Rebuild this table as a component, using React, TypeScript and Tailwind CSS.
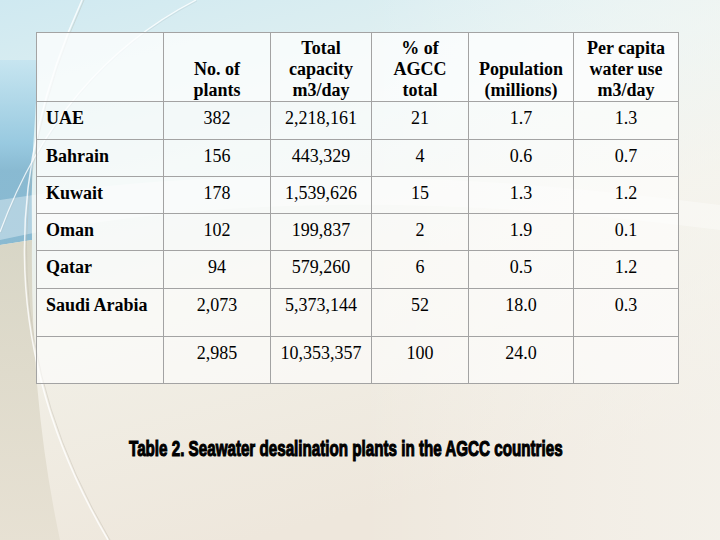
import React from 'react';

const serif = { fontFamily: '"Liberation Serif", "Times New Roman", serif' };

type Row = { name: string; cells: string[]; h: string };

const rows: Row[] = [
  { name: 'UAE', cells: ['382', '2,218,161', '21', '1.7', '1.3'], h: 'h-[38px]' },
  { name: 'Bahrain', cells: ['156', '443,329', '4', '0.6', '0.7'], h: 'h-[37px]' },
  { name: 'Kuwait', cells: ['178', '1,539,626', '15', '1.3', '1.2'], h: 'h-[37px]' },
  { name: 'Oman', cells: ['102', '199,837', '2', '1.9', '0.1'], h: 'h-[37px]' },
  { name: 'Qatar', cells: ['94', '579,260', '6', '0.5', '1.2'], h: 'h-[38px]' },
  { name: 'Saudi Arabia', cells: ['2,073', '5,373,144', '52', '18.0', '0.3'], h: 'h-[48px]' },
  { name: '', cells: ['2,985', '10,353,357', '100', '24.0', ''], h: 'h-[47px]' },
];

const headers = [
  ['No. of', 'plants'],
  ['Total', 'capacity', 'm3/day'],
  ['% of', 'AGCC', 'total'],
  ['Population', '(millions)'],
  ['Per capita', 'water use', 'm3/day'],
];

function Backdrop() {
  return (
    <svg className="absolute inset-0 w-full h-full" viewBox="0 0 720 540" preserveAspectRatio="none">
      <defs>
        <linearGradient id="base" x1="0" y1="0" x2="0.35" y2="1">
          <stop offset="0" stopColor="#cfe9f1" />
          <stop offset="0.35" stopColor="#e6f2f1" />
          <stop offset="0.6" stopColor="#f1efe6" />
          <stop offset="1" stopColor="#eee7dc" />
        </linearGradient>
        <linearGradient id="topright" x1="0" y1="0" x2="1" y2="0">
          <stop offset="0" stopColor="#ffffff" stopOpacity="0" />
          <stop offset="1" stopColor="#f8f8f4" stopOpacity="0.9" />
        </linearGradient>
        <linearGradient id="leftblue" x1="0" y1="0" x2="0" y2="1">
          <stop offset="0" stopColor="#c4e4f0" />
          <stop offset="0.45" stopColor="#8cc3dd" />
          <stop offset="0.6" stopColor="#79b0cc" />
          <stop offset="1" stopColor="#79b0cc" />
        </linearGradient>
        <linearGradient id="lefttan" x1="0" y1="0" x2="0" y2="1">
          <stop offset="0" stopColor="#d6d3c2" />
          <stop offset="1" stopColor="#e6e0d2" />
        </linearGradient>
      </defs>
      <rect width="720" height="540" fill="url(#base)" />
      <rect x="360" width="360" height="540" fill="url(#topright)" opacity="0.6" />
      <path d="M0,60 L40,60 Q30,150 32,240 L0,245 Z" fill="url(#leftblue)" opacity="0.85" />
      <path d="M0,245 L32,240 Q30,400 60,540 L0,540 Z" fill="url(#lefttan)" opacity="0.9" />
      <path d="M0,200 Q300,150 720,205 L720,230 Q300,175 0,240 Z" fill="#ffffff" opacity="0.35" />
      <path d="M82,0 Q-45,280 108,540" fill="none" stroke="#ffffff" strokeWidth="1.5" opacity="0.8" />
      <path d="M82,0 Q-45,280 108,540" fill="none" stroke="#b8b4a8" strokeWidth="0.6" opacity="0.6" transform="translate(2,0)" />
      <path d="M196,0 Q60,70 0,232" fill="none" stroke="#ffffff" strokeWidth="1.2" opacity="0.8" />
      <path d="M196,0 Q60,70 0,232" fill="none" stroke="#a9b8bc" strokeWidth="0.5" opacity="0.5" transform="translate(1,1)" />
    </svg>
  );
}

export default function App() {
  return (
    <div className="relative w-[720px] h-[540px] overflow-hidden">
      <Backdrop />
      <div className="relative pt-[32px] pl-[36px]">
        <table
          className="table-fixed border-collapse bg-white/60 text-[18px] leading-[21px] text-black"
          style={serif}
        >
          <colgroup>
            <col className="w-[127px]" />
            <col className="w-[107px]" />
            <col className="w-[101px]" />
            <col className="w-[97px]" />
            <col className="w-[105px]" />
            <col className="w-[105px]" />
          </colgroup>
          <thead>
            <tr className="h-[69px] bg-white/40">
              <th className="border border-[#a3a3a3]" />
              {headers.map((lines, i) => (
                <th key={i} className="border border-[#a3a3a3] align-bottom font-bold text-center pb-0">
                  {lines.map((l) => (
                    <div key={l}>{l}</div>
                  ))}
                </th>
              ))}
            </tr>
          </thead>
          <tbody>
            {rows.map((r, i) => (
              <tr key={i} className={r.h}>
                <td className="border border-[#a3a3a3] align-top pt-[6px] pl-[9px] font-bold whitespace-nowrap">
                  {r.name}
                </td>
                {r.cells.map((c, j) => (
                  <td key={j} className="border border-[#a3a3a3] align-top pt-[6px] text-center">
                    {c}
                  </td>
                ))}
              </tr>
            ))}
          </tbody>
        </table>
        <div className="mt-[50px] ml-[93px] h-[30px]">
          <span
            className="inline-block origin-left scale-x-[0.69] whitespace-nowrap text-[22px] leading-[30px] font-bold text-black [-webkit-text-stroke:1.1px_black]"
            style={{ fontFamily: '"Liberation Sans", Arial, sans-serif' }}
          >
            Table 2. Seawater desalination plants in the AGCC countries
          </span>
        </div>
      </div>
    </div>
  );
}
